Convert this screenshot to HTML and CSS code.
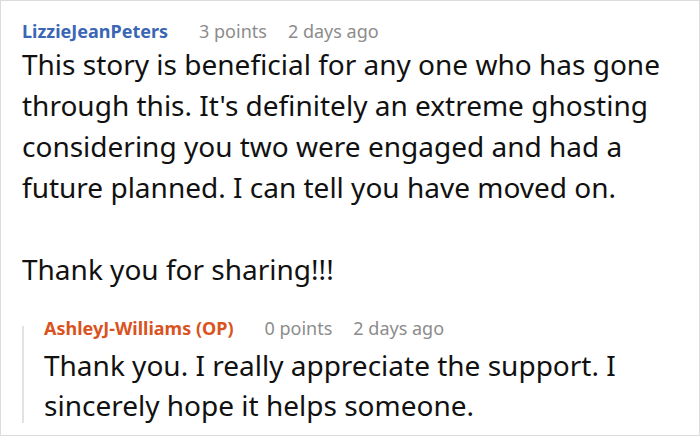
FILE: index.html
```html
<!DOCTYPE html>
<html>
<head>
<meta charset="utf-8">
<link rel="stylesheet" href="styles.css">
</head>
<body>
<div class="card">
  <div class="comment">
    <div class="meta">
      <span class="author">LizzieJeanPeters</span>
      <span class="info">3 points</span>
      <span class="info">2 days ago</span>
    </div>
    <div class="text">
      <p>This story is beneficial for any one who has gone through this. It's definitely an extreme ghosting considering you two were engaged and had a future planned. I can tell you have moved on.</p>
      <p>Thank you for sharing!!!</p>
    </div>
    <div class="reply">
      <div class="meta">
        <span class="author op">AshleyJ-Williams (OP)</span>
        <span class="info">0 points</span>
        <span class="info">2 days ago</span>
      </div>
      <div class="text">
        <p>Thank you. I really appreciate the support. I sincerely hope it helps someone.</p>
      </div>
    </div>
  </div>
</div>
</body>
</html>
```
FILE: styles.css
```css
* { box-sizing: border-box; }
html, body { margin: 0; padding: 0; background: #fff; }
body { font-family: "Noto Sans", "Open Sans", sans-serif; color: #111; }
.card {
  width: 700px;
  height: 436px;
  border: 1px solid #dcdcdc;
  overflow: hidden;
}
.comment { padding: 17px 12px 0 21px; }
.meta { display: flex; gap: 21px; align-items: baseline; font-size: 18px; line-height: 26px; }
.author { font-weight: bold; color: #3a66b3; margin-right: 10px; }
.author.op { color: #d9531e; }
.info { color: #8c8c8c; }
.text { font-size: 28px; line-height: 41px; margin-top: 0; }
.text p { margin: 0; }
.text p + p { margin-top: 41px; }
.reply {
  margin-top: 22px;
  padding-left: 22px;
  background: linear-gradient(#e2e2e2, #e2e2e2) no-repeat 0 14px / 2px calc(100% - 16px);
}
.reply .meta { padding-top: 3px; }
.reply .text { line-height: 40px; margin-top: 4px; }
```
